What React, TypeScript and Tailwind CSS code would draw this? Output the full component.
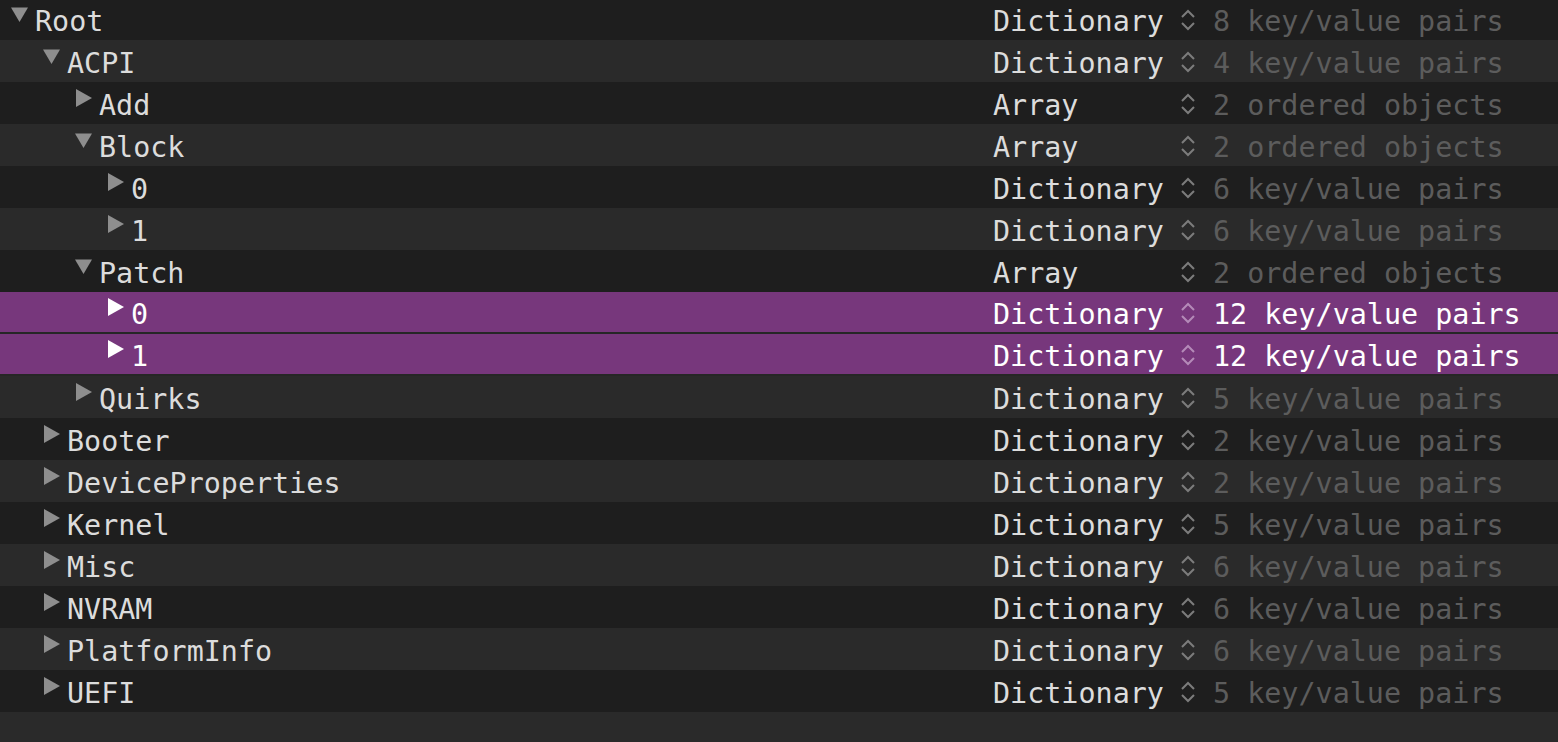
import React from "react";

type Row = {
  key: string;
  level: number;
  open: boolean | null;
  type: "Dictionary" | "Array";
  value: string;
  selected?: boolean;
};

const rows: Row[] = [
  { key: "Root", level: 0, open: true, type: "Dictionary", value: "8 key/value pairs" },
  { key: "ACPI", level: 1, open: true, type: "Dictionary", value: "4 key/value pairs" },
  { key: "Add", level: 2, open: false, type: "Array", value: "2 ordered objects" },
  { key: "Block", level: 2, open: true, type: "Array", value: "2 ordered objects" },
  { key: "0", level: 3, open: false, type: "Dictionary", value: "6 key/value pairs" },
  { key: "1", level: 3, open: false, type: "Dictionary", value: "6 key/value pairs" },
  { key: "Patch", level: 2, open: true, type: "Array", value: "2 ordered objects" },
  { key: "0", level: 3, open: false, type: "Dictionary", value: "12 key/value pairs", selected: true },
  { key: "1", level: 3, open: false, type: "Dictionary", value: "12 key/value pairs", selected: true },
  { key: "Quirks", level: 2, open: false, type: "Dictionary", value: "5 key/value pairs" },
  { key: "Booter", level: 1, open: false, type: "Dictionary", value: "2 key/value pairs" },
  { key: "DeviceProperties", level: 1, open: false, type: "Dictionary", value: "2 key/value pairs" },
  { key: "Kernel", level: 1, open: false, type: "Dictionary", value: "5 key/value pairs" },
  { key: "Misc", level: 1, open: false, type: "Dictionary", value: "6 key/value pairs" },
  { key: "NVRAM", level: 1, open: false, type: "Dictionary", value: "6 key/value pairs" },
  { key: "PlatformInfo", level: 1, open: false, type: "Dictionary", value: "6 key/value pairs" },
  { key: "UEFI", level: 1, open: false, type: "Dictionary", value: "5 key/value pairs" },
];

const indent = ["pl-[11px]", "pl-[43px]", "pl-[75px]", "pl-[107px]"];

function Disclosure({ open, selected }: { open: boolean | null; selected?: boolean }) {
  const fill = selected ? "#ffffff" : "#8e8e8e";
  return (
    <span className="w-[24px] h-[42px] flex items-start pt-[12px] shrink-0">
      {open ? (
        <svg width="17" height="15" viewBox="0 0 17 15">
          <path d="M0 0.5 L17 0.5 L8.5 15 Z" fill={fill} />
        </svg>
      ) : (
        <svg width="16" height="18" viewBox="0 0 16 18" className="ml-[1px] mt-[-2px]">
          <path d="M0 0 L16 9 L0 18 Z" fill={fill} />
        </svg>
      )}
    </span>
  );
}

function Stepper({ selected }: { selected?: boolean }) {
  const c = selected ? "#b48ab8" : "#7c7c7c";
  return (
    <svg width="16" height="22" viewBox="0 0 16 22">
      <path d="M2 8 L8 2 L14 8" fill="none" stroke={c} strokeWidth="2" />
      <path d="M2 14 L8 20 L14 14" fill="none" stroke={c} strokeWidth="2" />
    </svg>
  );
}

export default function App() {
  return (
    <div className="w-[1558px] h-[742px] overflow-hidden bg-[#2a2a2a] font-['DejaVu_Sans_Mono',monospace] text-[28.4px] text-[#dcdcdc]">
      <div className="mt-[-2px]">
        {rows.map((r, i) => {
          const bg = r.selected
            ? "bg-[#77377c] border-b-2 border-[#262626]"
            : i % 2 === 0
            ? "bg-[#1e1e1e]"
            : "bg-[#2a2a2a]";
          return (
            <div key={i} className={`flex items-center h-[42px] leading-[42px] ${bg}`}>
              <div className={`flex items-start w-[993px] shrink-0 ${indent[r.level]}`}>
                <Disclosure open={r.open} selected={r.selected} />
                <span className={`pt-[6px] ${r.selected ? "text-white" : ""}`}>{r.key}</span>
              </div>
              <div className={`w-[187px] shrink-0 pt-[6px] ${r.selected ? "text-white" : ""}`}>{r.type}</div>
              <div className="w-[33px] shrink-0 flex items-center h-[42px] pt-[2px]">
                <Stepper selected={r.selected} />
              </div>
              <div className={`pt-[6px] ${r.selected ? "text-white" : "text-[#5c5c5c]"}`}>{r.value}</div>
            </div>
          );
        })}
      </div>
    </div>
  );
}
